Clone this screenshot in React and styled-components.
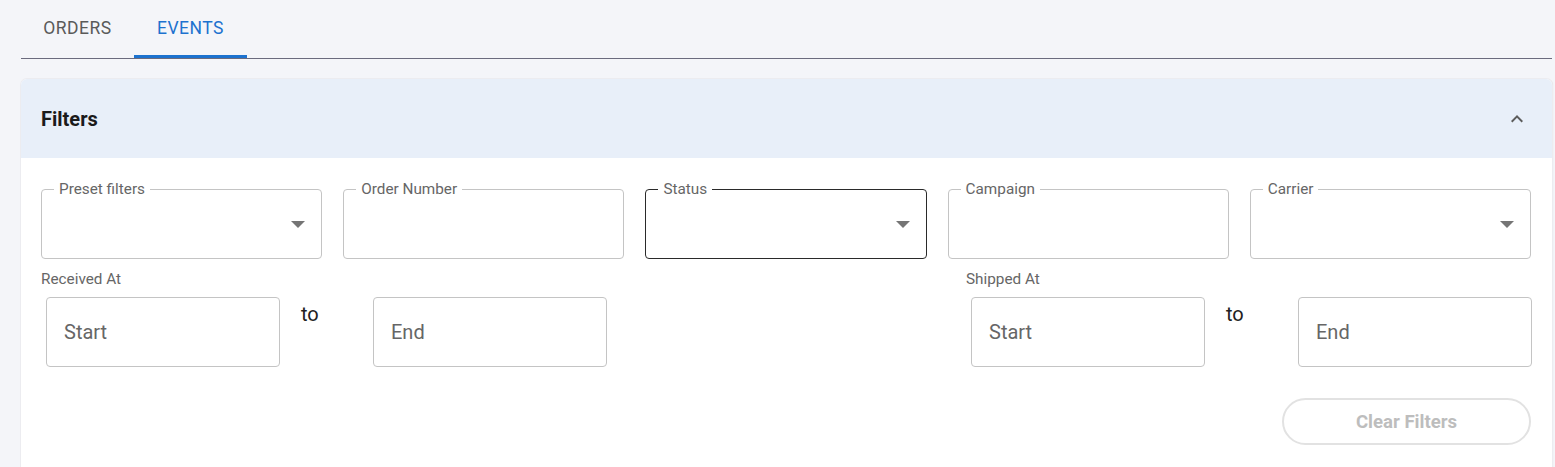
import React from "react";
import styled, { createGlobalStyle } from "styled-components";

const GlobalStyle = createGlobalStyle`
	html, body {
		margin: 0;
		padding: 0;
		background: #f4f5f9;
		font-family: Roboto, "Liberation Sans", Arial, sans-serif;
	}
`;

const Page = styled.div`
	padding: 0 3px 0 21px;
	height: 467px;
	overflow: hidden;
`;

const Tabs = styled.div`
	display: flex;
	height: 58px;
	border-bottom: 1px solid #6b6b7e;
`;

const Tab = styled.div`
	position: relative;
	display: flex;
	align-items: center;
	justify-content: center;
	width: 113px;
	padding-bottom: 2px;
	box-sizing: border-box;
	font-size: 17.5px;
	letter-spacing: 0.5px;
	color: ${(p) => (p.active ? "#1d72cf" : "#5a5a5a")};
	&::after {
		content: "";
		display: ${(p) => (p.active ? "block" : "none")};
		position: absolute;
		left: 0;
		right: 0;
		bottom: 0;
		height: 3px;
		background: #1d72cf;
	}
`;

const Panel = styled.div`
	margin-top: 20px;
	background: #fff;
	border-radius: 6px 6px 0 0;
	box-shadow: 0 0 0 1px #ececf0, 1px 0 1px #d8d8dc;
	height: 400px;
`;

const PanelHeader = styled.div`
	display: flex;
	align-items: center;
	justify-content: space-between;
	height: 79px;
	padding: 0 23px 0 20px;
	background: #e8eff9;
	border-radius: 6px 6px 0 0;
	font-size: 20px;
	font-weight: 700;
	color: #1b1b1b;
`;

const PanelBody = styled.div`
	padding: 31px 21px 0 20px;
`;

const FieldRow = styled.div`
	display: grid;
	grid-template-columns: repeat(5, 1fr);
	gap: 21px;
`;

const Field = styled.div`
	position: relative;
	height: 70px;
	box-sizing: border-box;
	border: 1px solid ${(p) => (p.focused ? "#2a2a2a" : "#c4c4c4")};
	border-radius: 4px;
`;

const FieldLabel = styled.span`
	position: absolute;
	top: -10px;
	left: 12px;
	padding: 0 5px;
	background: #fff;
	font-size: 15.3px;
	line-height: 18px;
	color: #666;
`;

const Arrow = styled.svg`
	position: absolute;
	right: 16px;
	top: 31px;
`;

const DateRow = styled.div`
	display: flex;
	justify-content: space-between;
	margin-top: 11px;
`;

const DateGroup = styled.div`
	display: flex;
	flex-direction: column;
	width: 565px;
`;

const GroupLabel = styled.div`
	font-size: 15.3px;
	line-height: 18px;
	color: #666;
`;

const DateInputs = styled.div`
	display: grid;
	grid-template-columns: 234px 93px 234px;
	margin: 9px 0 0 5px;
`;

const DateBox = styled.div`
	display: flex;
	align-items: center;
	height: 70px;
	box-sizing: border-box;
	padding: 0 17px 0 17px;
	border: 1px solid #c4c4c4;
	border-radius: 4px;
	font-size: 20px;
	color: #666;
`;

const To = styled.span`
	padding: 5px 0 0 21px;
	font-size: 20px;
	color: #222;
`;

const Actions = styled.div`
	display: flex;
	justify-content: flex-end;
	margin-top: 31px;
`;

const ClearButton = styled.button`
	width: 249px;
	height: 47px;
	border: 2px solid #e2e2e2;
	border-radius: 24px;
	background: #fff;
	font-family: inherit;
	font-size: 18.6px;
	font-weight: 700;
	color: #bdbdbd;
	cursor: default;
`;

function DropArrow() {
	return (
		<Arrow width="14" height="7" viewBox="0 0 14 7">
			<path d="M0 0 L14 0 L7 7 Z" fill="#757575" />
		</Arrow>
	);
}

const fields = [
	{ label: "Preset filters", select: true },
	{ label: "Order Number" },
	{ label: "Status", select: true, focused: true },
	{ label: "Campaign" },
	{ label: "Carrier", select: true },
];

function DateRange({ label }) {
	return (
		<DateGroup>
			<GroupLabel>{label}</GroupLabel>
			<DateInputs>
				<DateBox>Start</DateBox>
				<To>to</To>
				<DateBox>End</DateBox>
			</DateInputs>
		</DateGroup>
	);
}

export default function App() {
	return (
		<>
			<GlobalStyle />
			<Page>
				<Tabs>
					<Tab>ORDERS</Tab>
					<Tab active>EVENTS</Tab>
				</Tabs>
				<Panel>
					<PanelHeader>
						Filters
						<svg width="24" height="24" viewBox="0 0 24 24">
							<path
								d="M12 8l-6 6 1.41 1.41L12 10.83l4.59 4.58L18 14z"
								fill="#5c5c5c"
							/>
						</svg>
					</PanelHeader>
					<PanelBody>
						<FieldRow>
							{fields.map((f) => (
								<Field key={f.label} focused={f.focused}>
									<FieldLabel>{f.label}</FieldLabel>
									{f.select && <DropArrow />}
								</Field>
							))}
						</FieldRow>
						<DateRow>
							<DateRange label="Received At" />
							<DateRange label="Shipped At" />
						</DateRow>
						<Actions>
							<ClearButton>Clear Filters</ClearButton>
						</Actions>
					</PanelBody>
				</Panel>
			</Page>
		</>
	);
}
